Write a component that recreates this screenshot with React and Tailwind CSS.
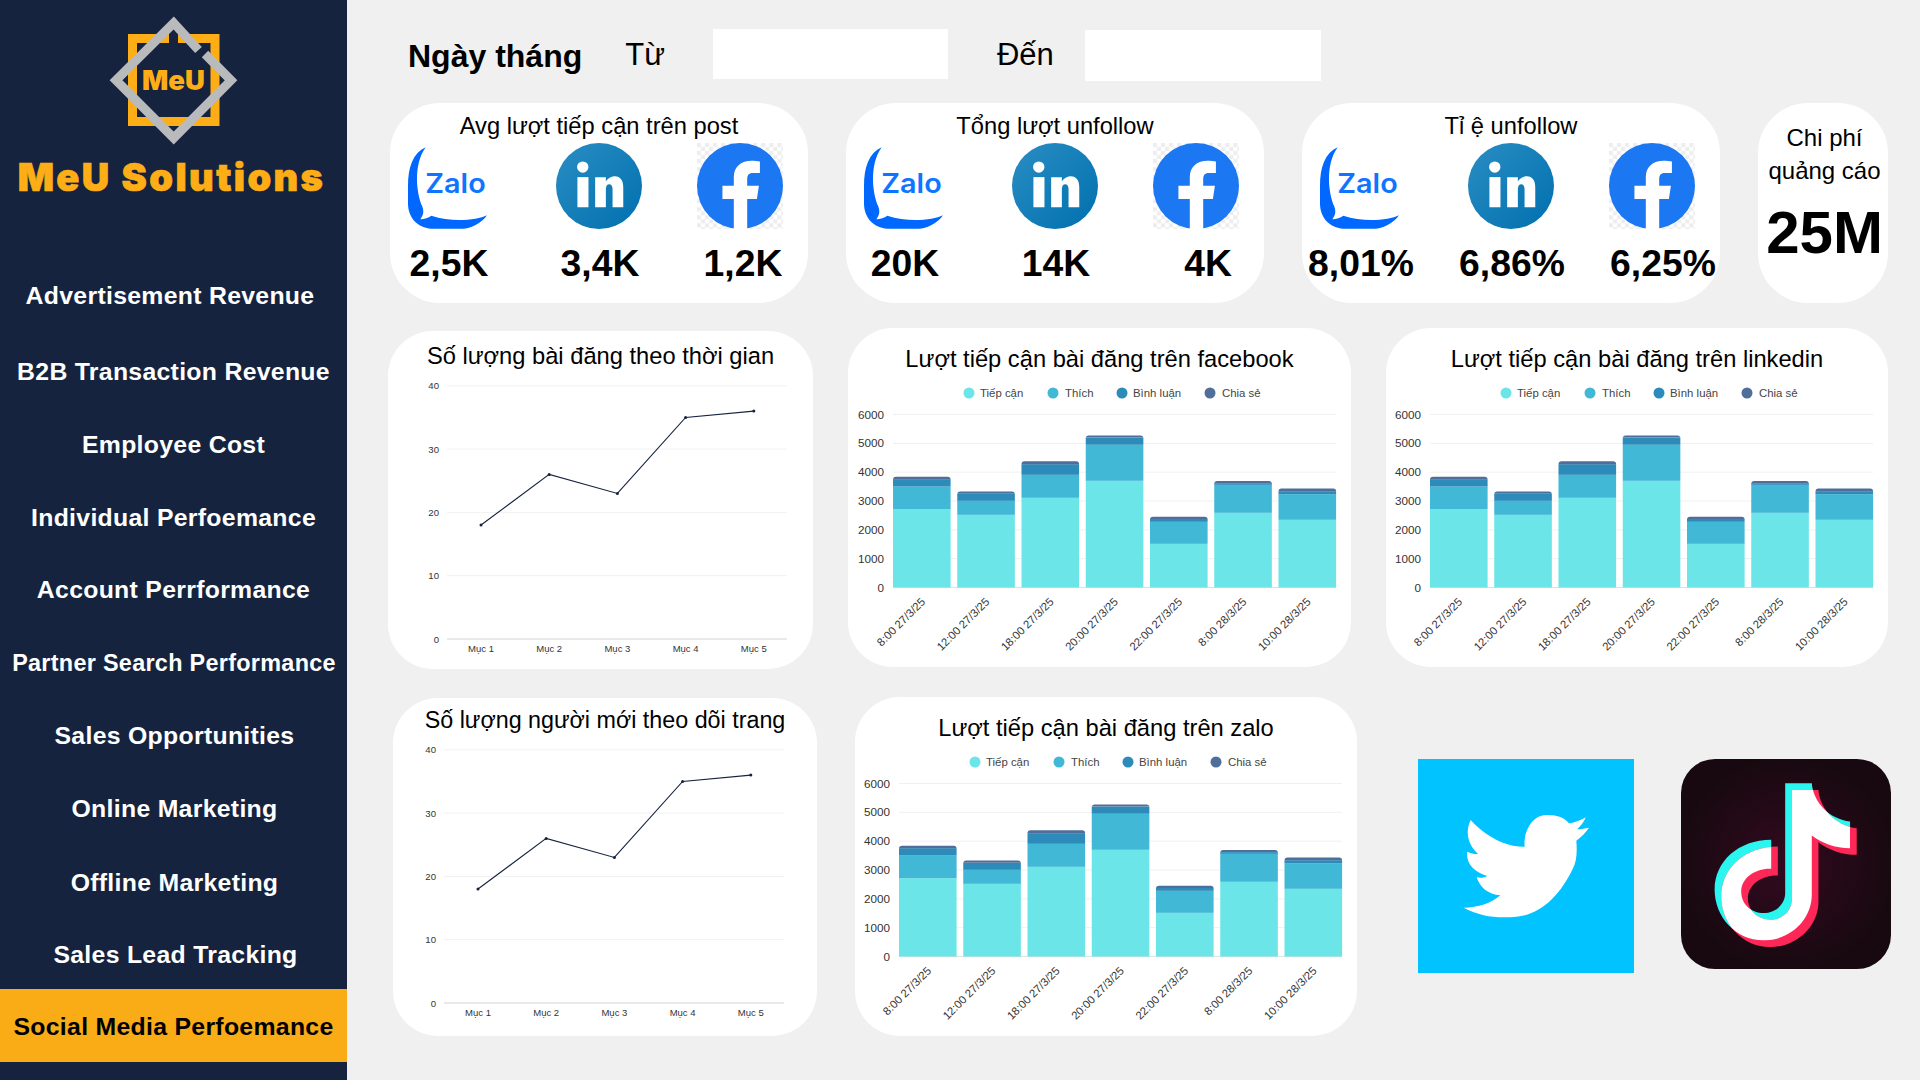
import React from 'react';

const NAV = [
  { label: 'Advertisement Revenue', cls: 'pt-[2px] pr-[7px] text-[24.8px]' },
  { label: 'B2B Transaction Revenue', cls: 'pt-[8px] text-[24.8px]' },
  { label: 'Employee Cost', cls: 'pt-[8px] text-[24.8px]' },
  { label: 'Individual Perfoemance', cls: 'pt-[8px] text-[24.8px]' },
  { label: 'Account Perrformance', cls: 'pt-[6px] text-[24.8px]' },
  { label: 'Partner Search Performance', cls: 'pt-[8px] pl-[1px] text-[23.4px]' },
  { label: 'Sales Opportunities', cls: 'pt-[5px] pl-[2px] text-[24.8px]' },
  { label: 'Online Marketing', cls: 'pt-[5px] pl-[2px] text-[24.8px]' },
  { label: 'Offline Marketing', cls: 'pt-[6px] pl-[2px] text-[24.8px]' },
  { label: 'Sales Lead Tracking', cls: 'pt-[4px] pl-[4px] text-[24.8px]' },
];

const BARS = [
  ['8:00 27/3/25', 2717, 3500, 3757, 3838],
  ['12:00 27/3/25', 2520, 3005, 3250, 3330],
  ['18:00 27/3/25', 3110, 3907, 4277, 4380],
  ['20:00 27/3/25', 3700, 4950, 5200, 5270],
  ['22:00 27/3/25', 1514, 2277, 2380, 2450],
  ['8:00 28/3/25', 2590, 3560, 3620, 3690],
  ['10:00 28/3/25', 2347, 3237, 3340, 3430],
];
const COLORS = ['#6ce5e8', '#41b8d5', '#2d8bba', '#506e9a'];
const LEGEND = [
  ['Tiếp cận', 120, 131],
  ['Thích', 204, 216],
  ['Bình luận', 273, 284],
  ['Chia sẻ', 361, 373],
];
const LINE = [18, 26, 23, 35, 36];

const Logo = () => (
  <svg width="140" height="140" viewBox="104 10 140 140" className="block">
    <path d="M169 38.5H132.5V121.5H215V38.5H178" fill="none" stroke="#fdae16" strokeWidth="9" />
    <path d="M198.5 50 173.7 23 116 80.3 173.7 138 231 80.3 205 54" fill="none" stroke="#b8babc" strokeWidth="9" />
    <text x="173.5" y="90" textAnchor="middle" fontSize="27.5" fontWeight="900" fill="#fdae16" fontFamily="Inter, sans-serif">MeU</text>
  </svg>
);

const Zalo = () => (
  <svg width="80" height="86" viewBox="85 160 240 257" className="block">
    <path d="M138 172C100 190 85 230 85 290V340C85 385 115 417 165 417H240C275 417 305 400 322 376C290 392 215 398 155 378C145 385 135 388 122 388C132 375 133 365 128 350C110 310 100 225 138 172Z" fill="#0068ff" />
    <text x="137" y="310" fontSize="82" fontWeight="600" fill="#0f75ff" textLength="181" lengthAdjust="spacingAndGlyphs" fontFamily="Inter, sans-serif">Zalo</text>
  </svg>
);

const Linkedin = () => (
  <svg width="86" height="86" viewBox="528 160 257 257" className="block">
    <defs>
      <linearGradient id="li" x1="0" y1="0" x2="1" y2="1">
        <stop offset="0" stopColor="#2a8dc2" />
        <stop offset="1" stopColor="#0070af" />
      </linearGradient>
    </defs>
    <circle cx="656.5" cy="288.5" r="128.5" fill="url(#li)" />
    <circle cx="608" cy="232" r="17" fill="#fff" />
    <rect x="592" y="262" width="33" height="90" fill="#fff" />
    <path d="M645 262H677V274C684 264 695 259 704 259C720 259 729 271 729 292V352H697V298C697 288 693 283 687 283C680 283 677 289 677 298V352H645Z" fill="#fff" />
  </svg>
);

const Facebook = () => (
  <svg width="86" height="86" viewBox="952 160 257 257" className="block">
    <defs>
      <pattern id="checker" x="952" y="160" width="24" height="24" patternUnits="userSpaceOnUse">
        <rect width="24" height="24" fill="#fff" />
        <rect width="12" height="12" fill="#ededed" />
        <rect x="12" y="12" width="12" height="12" fill="#ededed" />
      </pattern>
    </defs>
    <rect x="952" y="160" width="257" height="257" fill="url(#checker)" />
    <circle cx="1080.5" cy="288.5" r="128.5" fill="#1b77f2" />
    <path d="M1062 417V327H1028V288H1062V262C1062 230 1085 213 1115 213C1125 213 1133 214 1140 215V250H1120C1105 250 1102 258 1102 270V288H1137L1131 327H1102V417Z" fill="#fff" />
  </svg>
);

const StatCard = ({ title, values, lastClass = '' }) => (
  <div className="w-[418px] h-[200px] rounded-[50px] bg-white">
    <div className="pt-[8px] h-[37px] text-center text-[23.7px] leading-[30px]">{title}</div>
    <div className="flex mt-[3px] pl-[18px] h-[86px]">
      <Zalo />
      <div className="ml-[68px]"><Linkedin /></div>
      <div className="ml-[55px]"><Facebook /></div>
    </div>
    <div className="grid grid-cols-[118px_184px_116px] mt-[14px] text-center font-bold text-[37.3px] leading-[40px] whitespace-nowrap">
      <div className="flex justify-center">{values[0]}</div>
      <div className="flex justify-center">{values[1]}</div>
      <div className={`flex justify-center ${lastClass}`}>{values[2]}</div>
    </div>
  </div>
);

const LineCard = ({ title, titleCls, w, ox, oy, cls }) => {
  const sx = 68.2;
  const sy = 6.33;
  const pts = LINE.map((v, i) => [ox + 34 + i * sx, oy + 253 - v * sy]);
  return (
    <div className={`h-[338px] rounded-[45px] bg-white flex flex-col items-center ${cls}`}>
      <div className={`${titleCls} h-[44px] leading-[30px] whitespace-nowrap`}>{title}</div>
      <svg width={w} height="294" viewBox={`0 44 ${w} 294`} className="block">
        {[0, 1, 2, 3, 4].map((n) => {
          const y = oy + 253 - n * 63.3;
          return (
            <g key={n}>
              <line x1={ox} x2={ox + 340} y1={y} y2={y} stroke={n === 0 ? '#d4d4d4' : '#f1f1f1'} strokeWidth="1" />
              <text x={ox - 8} y={y + 3.5} textAnchor="end" fontSize="9.6" fill="#333">{n * 10}</text>
            </g>
          );
        })}
        <polyline points={pts.map((p) => p.join(',')).join(' ')} fill="none" stroke="#15233f" strokeWidth="1.1" />
        {pts.map((p, i) => (
          <g key={i}>
            <circle cx={p[0]} cy={p[1]} r="1.5" fill="#15233f" />
            <text x={p[0]} y={oy + 266} textAnchor="middle" fontSize="9.5" fill="#333">{`Mục ${i + 1}`}</text>
          </g>
        ))}
      </svg>
    </div>
  );
};

const BarCard = ({ title, pt, cls }) => {
  const ox = 44;
  const base = 259.5;
  const k = 173 / 6000;
  return (
    <div className={`h-[339px] rounded-[45px] bg-white flex flex-col items-center ${cls}`}>
      <div className={`${pt} h-[52px] text-[23.7px] leading-[30px] whitespace-nowrap`}>{title}</div>
      <svg width="502" height="287" viewBox="0 52 502 287" className="block">
        {LEGEND.map(([t, dot, tx], i) => (
          <g key={t}>
            <circle cx={dot} cy="65" r="5.5" fill={COLORS[i]} />
            <text x={tx} y="69" fontSize="11.4" fill="#444">{t}</text>
          </g>
        ))}
        {[0, 1, 2, 3, 4, 5, 6].map((n) => {
          const y = base - n * 1000 * k;
          return (
            <g key={n}>
              <line x1={ox} x2={ox + 443} y1={y} y2={y} stroke={n === 0 ? '#dfdfdf' : '#f0f0f0'} strokeWidth="1" />
              <text x={ox - 9} y={y + 4} textAnchor="end" fontSize="11.7" fill="#333">{n * 1000}</text>
            </g>
          );
        })}
        {BARS.map(([label, a, b, c, d], i) => {
          const x = ox + i * 64.25;
          const w = 57.6;
          const tops = [a, b, c].map((v) => base - v * k);
          const top = base - d * k;
          return (
            <g key={label}>
              <rect x={x} y={tops[0]} width={w} height={base - tops[0]} fill={COLORS[0]} />
              <rect x={x} y={tops[1]} width={w} height={tops[0] - tops[1]} fill={COLORS[1]} />
              <rect x={x} y={tops[2]} width={w} height={tops[1] - tops[2]} fill={COLORS[2]} />
              <path d={`M${x} ${tops[2]}V${top + 3}Q${x} ${top} ${x + 3} ${top}H${x + w - 3}Q${x + w} ${top} ${x + w} ${top + 3}V${tops[2]}Z`} fill={COLORS[3]} />
              <text transform={`translate(${x + 33} 274.5) rotate(-45)`} textAnchor="end" fontSize="11.3" fill="#333">{label}</text>
            </g>
          );
        })}
      </svg>
    </div>
  );
};

const TwitterTile = () => (
  <div className="w-[216px] h-[214px] mt-[62px] ml-[61px] bg-[#00c3ff]">
    <svg width="216" height="214" viewBox="55 57 648 642" className="block">
      <path
        d="M213 240C245 275 305 322 375 320C370 280 395 225 440 225C470 224 495 232 508 250C525 248 545 240 558 232C552 248 543 258 532 268C545 268 557 265 568 263C558 278 545 290 530 302C533 340 530 365 520 385C480 470 420 525 350 530C290 535 245 530 192 503C235 503 275 490 302 466C265 465 240 440 231 412C243 415 253 413 263 408C225 395 200 375 202 335C215 340 225 343 235 342C200 310 198 270 213 240Z"
        fill="#fff"
      />
    </svg>
  </div>
);

const NOTE =
  'M1155 130H1235C1240 190 1290 238 1350 245V325C1305 325 1265 310 1235 287V465C1235 540 1170 602 1090 602C1005 602 943 530 943 450C943 365 1015 300 1113 300V387C1065 385 1023 415 1023 455C1023 495 1055 520 1090 520C1125 520 1155 495 1155 460Z';

const TiktokTile = () => (
  <div className="w-[210px] h-[210px] mt-[62px] ml-[47px] rounded-[34px] overflow-hidden bg-[radial-gradient(circle,#330a20_0%,#17090f_75%)]">
    <svg width="210" height="210" viewBox="842 57 631 631" className="block">
      <defs>
        <clipPath id="note-clip">
          <path d={NOTE} />
        </clipPath>
      </defs>
      <path d={NOTE} fill="#2af5ee" />
      <path d={NOTE} fill="#fe2858" transform="translate(20 20)" />
      <g clipPath="url(#note-clip)">
        <path d={NOTE} fill="#fff" transform="translate(20 20)" />
      </g>
    </svg>
  </div>
);

export default function App() {
  return (
    <div className="flex w-[1920px] h-[1080px] overflow-hidden bg-[#f0f0f0] text-black font-['Liberation_Sans','Noto_Sans',sans-serif]">
      {/* Sidebar */}
      <aside className="w-[347px] shrink-0 bg-[#15233f] flex flex-col">
        <div className="h-[258px] flex flex-col items-center">
          <div className="mt-[10px]"><Logo /></div>
          <div className="mt-[4px] pr-[4px] font-['Inter',sans-serif] font-black text-[38px] leading-[46px] tracking-[2.4px] text-[#fdae16] [-webkit-text-stroke:0.7px_#fdae16] whitespace-nowrap">
            MeU Solutions
          </div>
        </div>
        {NAV.map((item) => (
          <div key={item.label} className={`h-[73.1px] flex items-center justify-center text-white font-bold tracking-[0.3px] whitespace-nowrap ${item.cls}`}>
            {item.label}
          </div>
        ))}
        <div className="h-[73px] pt-[2px] bg-[#f9ac16] flex items-center justify-center font-bold text-[24.8px] tracking-[0.3px] whitespace-nowrap">
          Social Media Perfoemance
        </div>
      </aside>

      {/* Main */}
      <main className="flex-1 flex flex-col min-w-0">
        <div className="h-[103px] flex items-start pt-[29px] pl-[61px]">
          <div className="font-bold text-[32px] leading-[54px] whitespace-nowrap">Ngày tháng</div>
          <div className="ml-[43px] text-[31px] leading-[52px]">Từ</div>
          <div className="ml-[48px] w-[235px] h-[50px] bg-white" />
          <div className="ml-[49px] text-[31px] leading-[52px]">Đến</div>
          <div className="ml-[31px] mt-[1px] w-[236px] h-[51px] bg-white" />
        </div>

        <div className="flex gap-[38px] pl-[43px]">
          <StatCard title="Avg lượt tiếp cận trên post" values={['2,5K', '3,4K', '1,2K']} lastClass="pr-[14px]" />
          <StatCard title="Tổng lượt unfollow" values={['20K', '14K', '4K']} lastClass="pl-[4px]" />
          <StatCard title="Tỉ ệ unfollow" values={['8,01%', '6,86%', '6,25%']} lastClass="pl-[2px]" />
          <div className="w-[130px] h-[200px] pl-[3px] rounded-[50px] bg-white flex flex-col items-center">
            <div className="pt-[18px] text-center text-[24px] leading-[33px]">Chi phí<br />quảng cáo</div>
            <div className="mt-[11px] font-bold text-[60px] leading-[70px]">25M</div>
          </div>
        </div>

        <div className="flex items-start mt-[25px] pl-[41px]">
          <LineCard title="Số lượng bài đăng theo thời gian" titleCls="pt-[10px] text-[23.7px]" w={425} ox={59} oy={55} cls="w-[425px] mt-[3px]" />
          <BarCard title="Lượt tiếp cận bài đăng trên facebook" pt="pt-[16px]" cls="w-[503px] ml-[35px]" />
          <BarCard title="Lượt tiếp cận bài đăng trên linkedin" pt="pt-[16px]" cls="w-[502px] ml-[35px]" />
        </div>

        <div className="flex items-start mt-[28px] pl-[46px]">
          <LineCard title="Số lượng người mới theo dõi trang" titleCls="pt-[7px] text-[23.3px]" w={424} ox={51} oy={52} cls="w-[424px] mt-[1px]" />
          <BarCard title="Lượt tiếp cận bài đăng trên zalo" pt="pt-[16px]" cls="w-[502px] ml-[38px]" />
          <TwitterTile />
          <TiktokTile />
        </div>
      </main>
    </div>
  );
}
